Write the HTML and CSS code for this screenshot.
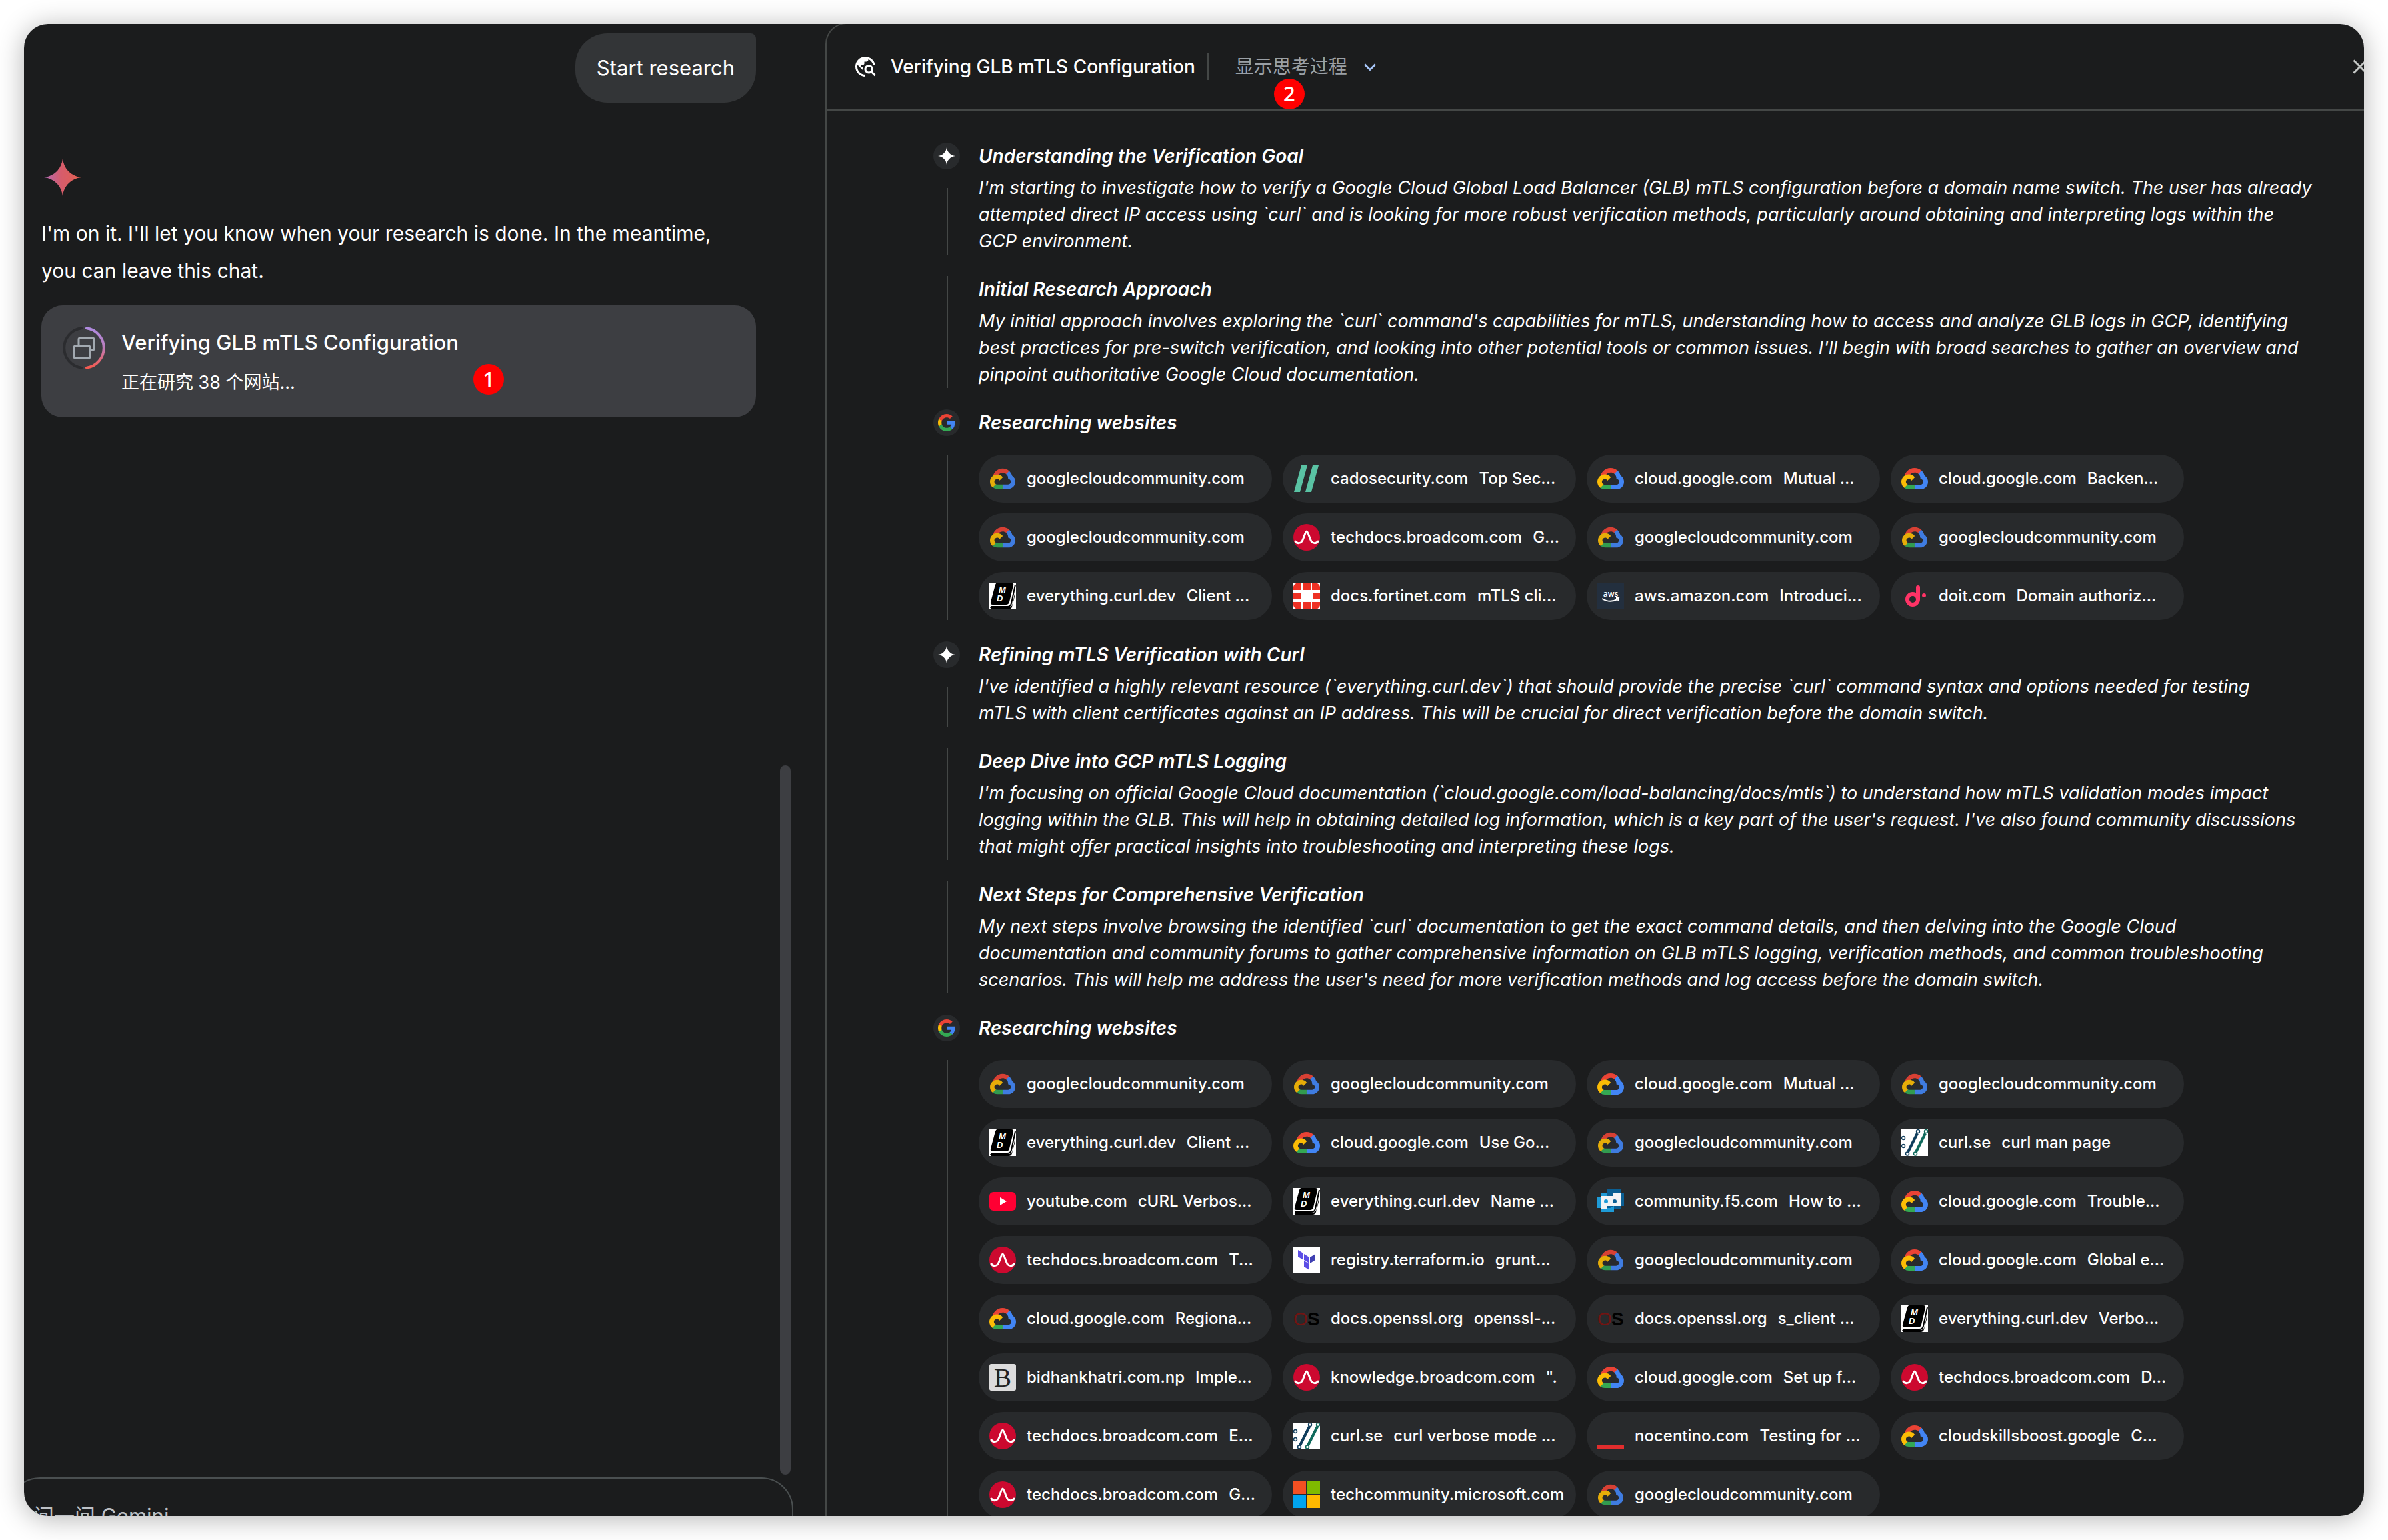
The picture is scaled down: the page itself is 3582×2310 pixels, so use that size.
FILE: index.html
```html
<!DOCTYPE html>
<html lang="zh-CN">
<head>
<meta charset="utf-8">
<title>Verifying GLB mTLS Configuration</title>
<link rel="stylesheet" href="styles.css">
</head>
<body>
<svg class="sprite" aria-hidden="true">
  <symbol id="spark" viewBox="0 0 24 24"><path d="M12 0c.7 6.500 5.500 11.300 12 12-6.500.7-11.300 5.500-12 12-.7-6.500-5.500-11.300-12-12C6.500 11.300 11.300 6.500 12 0z"/></symbol>
  <symbol id="google" viewBox="0 0 48 48">
    <path fill="#EA4335" d="M24 9.500c3.540 0 6.710 1.220 9.210 3.600l6.850-6.850C35.900 2.380 30.470 0 24 0 14.620 0 6.510 5.380 2.560 13.220l7.980 6.190C12.430 13.720 17.740 9.500 24 9.500z"/>
    <path fill="#4285F4" d="M46.980 24.550c0-1.570-.15-3.090-.38-4.550H24v9.020h12.940c-.58 2.960-2.260 5.480-4.780 7.180l7.730 6c4.510-4.180 7.090-10.360 7.090-17.650z"/>
    <path fill="#FBBC05" d="M10.530 28.590c-.48-1.450-.76-2.990-.76-4.590s.27-3.140.76-4.590l-7.980-6.190C.92 16.460 0 20.120 0 24c0 3.880.92 7.540 2.560 10.780l7.970-6.190z"/>
    <path fill="#34A853" d="M24 48c6.480 0 11.930-2.130 15.890-5.810l-7.730-6c-2.150 1.450-4.920 2.300-8.160 2.300-6.260 0-11.570-4.220-13.470-9.910l-7.980 6.190C6.510 42.620 14.620 48 24 48z"/>
  </symbol>
  <symbol id="gcloud" viewBox="0 -25 256 256">
    <path fill="#EA4335" d="M170.252 56.819l22.253-22.253 1.483-9.370C153.437-11.677 88.976-7.496 52.420 33.920 42.267 45.423 34.734 59.764 30.717 74.573l7.970-1.123 44.505-7.340 3.436-3.513c19.797-21.742 53.270-24.667 76.128-6.168l7.496.39z"/>
    <path fill="#4285F4" d="M224.205 73.918a100.249 100.249 0 0 0-30.217-48.722l-31.232 31.232a55.515 55.515 0 0 1 20.379 44.037v5.544c15.350 0 27.797 12.445 27.797 27.796 0 15.352-12.446 27.573-27.797 27.573h-55.671l-5.466 5.934v33.340l5.466 5.231h55.670c39.930.311 72.553-31.494 72.864-71.424a72.303 72.303 0 0 0-31.793-60.541"/>
    <path fill="#34A853" d="M71.870 205.796h55.593V161.290H71.870a27.275 27.275 0 0 1-11.400-2.498l-7.887 2.420-22.409 22.253-1.952 7.574a72.175 72.175 0 0 0 43.648 14.757"/>
    <path fill="#FBBC05" d="M71.870 61.425C31.940 61.664-.237 94.228.001 134.158a72.301 72.301 0 0 0 28.222 56.880l32.248-32.246c-13.990-6.322-20.208-22.786-13.887-36.776 6.320-13.990 22.786-20.208 36.775-13.888a27.796 27.796 0 0 1 13.887 13.888l32.248-32.248A72.224 72.224 0 0 0 71.870 61.425"/>
  </symbol>
  <symbol id="gcommunity" viewBox="0 0 40 40"><use href="#gcloud" x="1" y="1" width="38" height="38" opacity=".9"/></symbol>
  <symbol id="cado" viewBox="0 0 40 40"><path fill="#5ac3a4" d="M12 0h9L10 40H1zM29 0h9L27 40h-9z"/></symbol>
  <symbol id="broadcom" viewBox="0 0 40 40"><circle cx="20" cy="20" r="20" fill="#cc092f"/><path fill="none" stroke="#fff" stroke-width="3" stroke-linecap="round" stroke-linejoin="round" d="M3 26c3 4 8 3 10 0 3-5 5-15 7-15s4 10 7 15c2 3 7 4 10 0"/></symbol>
  <symbol id="md" viewBox="0 0 40 40"><path fill="#fff" d="M0 0h40v40H0z"/><path d="M12 0h21q4 0 3 4l-6 25q-1 4-5 4H5q-4 0-3-4L9 3q1-3 3-3z"/><path fill="none" stroke="#000" stroke-width="2" d="M39 3l-6 28q-1 5-6 5H2"/><path d="M1 37h27q6 0 7-6l4-19v5l-5 19q-1 4-5 4H3z"/><text x="14" y="15" class="glyph-md" font-size="13">M</text><text x="11" y="28" class="glyph-md" font-size="13">D</text></symbol>
  <symbol id="fortinet" viewBox="0 0 40 40"><path fill="#fff" d="M0 0h40v40H0z"/><path fill="#ee3124" d="M6 0h6v11H0V6q1-4 6-6zM14 0h12v11H14zM28 0h6q5 2 6 6v5H28zM0 15h11v10H0zM29 15h11v10H29zM0 29h12v11H6q-5-2-6-6zM14 29h12v11H14zM28 29h12v5q-1 4-6 6h-6z"/></symbol>
  <symbol id="aws" viewBox="0 0 40 40"><path fill="#232f3e" d="M0 0h40v40H0z"/><text x="20" y="21" text-anchor="middle" class="glyph-aws" font-size="12">aws</text><path fill="none" stroke="#fff" stroke-width="2" d="M7 24q12 7 23 1M28 23h4l-1 4"/></symbol>
  <symbol id="doit" viewBox="0 0 40 40"><circle cx="17" cy="25" r="8" fill="none" stroke="#ff3366" stroke-width="6"/><path stroke="#ff3366" stroke-width="6" stroke-linecap="round" d="M25 7v17"/><circle cx="34" cy="19" r="3" fill="#ff3366"/></symbol>
  <symbol id="curl" viewBox="0 0 40 40"><path fill="#fff" d="M0 0h40v40H0z"/><g fill="none" stroke-width="1.500"><g stroke="#0f3d5c"><circle cx="3" cy="13" r="2.500"/><circle cx="3" cy="25" r="2.500"/><circle cx="25" cy="3" r="2.500"/><circle cx="9" cy="36.500" r="2.500"/><path stroke-width="4" d="M24 6L10 34"/></g><g stroke="#0f6a5c"><circle cx="37" cy="3" r="2.500"/><circle cx="21" cy="36.500" r="2.500"/><path stroke-width="4" d="M36 6L22 34"/></g></g></symbol>
  <symbol id="youtube" viewBox="0 0 40 40"><rect y="6" width="40" height="28" rx="6" fill="#ff0033"/><path fill="#fff" d="M16 14l10 6-10 6z"/></symbol>
  <symbol id="f5" viewBox="0 0 40 40"><path fill="#1e9bd7" d="M5 7h15v6h5v23H5v-6H0V13h5z"/><path fill="#0a5f94" d="M15 2h20v5h5v20h-5v5H15zM15 32h10v-5z"/><path fill="#1e9bd7" d="M5 7h10v6H5zM5 30h20v6H5z"/><path fill="#f2f4f6" d="M6 12h18V7h11v20H15v4H6z"/><circle cx="13" cy="20" r="3" fill="#1e9bd7"/><circle cx="26" cy="20" r="3" fill="#0a5f94"/></symbol>
  <symbol id="terraform" viewBox="0 0 40 40"><path fill="#fff" d="M0 0h40v40H0z"/><path fill="#5c4ee5" d="M7 5l8 5v10l-8-5zM16 11l8 5v9l-8-5zM16 21l8 5v9l-8-5z"/><path fill="#4040b2" d="M25 16l8-5v9l-8 5z"/></symbol>
  <symbol id="openssl" viewBox="0 0 40 40"><text x="0" y="30" class="glyph-o" font-size="28">O</text><text x="21" y="30" class="glyph-s" font-size="28">S</text></symbol>
  <symbol id="bidhan" viewBox="0 0 40 40"><rect width="40" height="40" rx="3" fill="#dcdcdc"/><text x="20" y="34" text-anchor="middle" class="glyph-b" font-size="39">B</text></symbol>
  <symbol id="nocentino" viewBox="0 0 40 40"><path fill="#e12d2d" d="M0 33h40v7H0z"/></symbol>
  <symbol id="microsoft" viewBox="0 0 40 40"><path fill="#f25022" d="M0 0h19v19H0z"/><path fill="#7fba00" d="M21 0h19v19H21z"/><path fill="#00a4ef" d="M0 21h19v19H0z"/><path fill="#ffb900" d="M21 21h19v19H21z"/></symbol>
</svg>

<main class="window">
  <section class="chat">
    <div class="thread">
      <p class="prompt">Start research</p>
      <svg class="avatar" viewBox="0 0 64 64" aria-hidden="true">
        <linearGradient id="spark-fill" x1="0" y1="0" x2="1" y2="0">
          <stop offset="0" stop-color="#b06ab3"/><stop offset=".45" stop-color="#d65c6c"/><stop offset="1" stop-color="#e2604f"/>
        </linearGradient>
        <use href="#spark" x="4" y="4" width="56" height="56" fill="url(#spark-fill)"/>
      </svg>
      <p class="reply">I'm on it. I'll let you know when your research is done. In the meantime,<br>you can leave this chat.</p>
      <button class="task" type="button">
        <svg class="task-icon" viewBox="0 0 64 64" aria-hidden="true">
          <linearGradient id="ring-fill" x1="0" y1="0" x2="0" y2="1">
            <stop offset="0" stop-color="#b08be0"/><stop offset=".45" stop-color="#b97fc0"/><stop offset="1" stop-color="#f55a50"/>
          </linearGradient>
          <g fill="none" stroke-width="4" stroke-linecap="round">
            <path stroke="#2b2c2f" d="M28 2.300A30 30 0 0 0 28 61.700"/>
            <path stroke="url(#ring-fill)" d="M36 2.300A30 30 0 0 1 36 61.700"/>
          </g>
          <g fill="none" stroke="#a2a9b0" stroke-width="3" stroke-linejoin="round">
            <path d="M24 28V19q0-2 2-2h19q2 0 2 2v14q0 2-2 2h-4"/>
            <rect x="17" y="29" width="24" height="18" rx="2"/>
          </g>
        </svg>
        <span class="task-text">
          <span class="task-title">Verifying GLB mTLS Configuration</span>
          <span class="task-status">正在研究 38 个网站...</span>
        </span>
        <span class="badge badge-card">1</span>
      </button>
      <div class="thumb"></div>
    </div>
    <form class="composer">
      <textarea class="composer-input" rows="1" aria-label="问一问 Gemini" placeholder="问一问 Gemini"></textarea>
    </form>
  </section>

  <section class="panel">
    <header class="panel-head">
      <svg class="head-icon" viewBox="0 0 24 24" aria-hidden="true"><path fill="#fff" d="M19.300 16.900c.4-.7.7-1.500.7-2.400 0-2.500-2-4.500-4.500-4.500S11 12 11 14.500s2 4.500 4.500 4.500c.9 0 1.700-.3 2.400-.7l3.200 3.200 1.400-1.400-3.200-3.200zm-3.800.1c-1.400 0-2.500-1.100-2.500-2.500s1.100-2.500 2.500-2.500 2.500 1.100 2.500 2.500-1.100 2.500-2.500 2.500zM12 20v2C6.480 22 2 17.520 2 12S6.480 2 12 2c4.840 0 8.870 3.440 9.800 8h-2.070c-.64-2.460-2.400-4.470-4.730-5.410V5c0 1.100-.9 2-2 2h-2v2c0 .55-.45 1-1 1H8v2h2v3H9l-4.790-4.790C4.080 10.790 4 11.380 4 12c0 4.410 3.590 8 8 8z"/></svg>
      <h1 class="head-title">Verifying GLB mTLS Configuration</h1>
      <button class="toggle" type="button">
        <span>显示思考过程</span>
        <svg class="head-icon" viewBox="0 0 24 24" aria-hidden="true"><path fill="none" stroke="#a8c7fa" stroke-width="2" d="M6.700 9.700l5.300 5.300 5.300-5.300"/></svg>
        <span class="badge badge-toggle">2</span>
      </button>
      <button class="close" type="button" aria-label="关闭"><svg class="head-icon" viewBox="0 0 24 24" aria-hidden="true"><path fill="none" stroke="#c4c7c5" stroke-width="2" d="M5.700 5.700l12.600 12.600M18.300 5.700L5.700 18.300"/></svg></button>
    </header>

    <div class="steps">
      <section class="step">
        <div class="rail"><span class="dot"><svg class="dot-spark" aria-hidden="true"><use href="#spark"/></svg></span><span class="line"></span></div>
        <div class="thought"><h2>Understanding the Verification Goal</h2>
        <p>I'm starting to investigate how to verify a Google Cloud Global Load Balancer (GLB) mTLS configuration before a domain name switch. The user has already<br>attempted direct IP access using `curl` and is looking for more robust verification methods, particularly around obtaining and interpreting logs within the<br>GCP environment.</p></div>
      </section>
      <section class="step">
        <div class="rail"><span class="line"></span></div>
        <div class="thought"><h2>Initial Research Approach</h2>
        <p>My initial approach involves exploring the `curl` command's capabilities for mTLS, understanding how to access and analyze GLB logs in GCP, identifying<br>best practices for pre-switch verification, and looking into other potential tools or common issues. I'll begin with broad searches to gather an overview and<br>pinpoint authoritative Google Cloud documentation.</p></div>
      </section>
      <section class="step">
        <div class="rail"><span class="dot"><svg class="dot-google" aria-hidden="true"><use href="#google"/></svg></span><span class="line"></span></div>
        <div class="sources"><h2>Researching websites</h2>
        <ul class="chips">
          <li><a class="chip" href="#"><svg aria-hidden="true"><use href="#gcommunity"/></svg><span>googlecloudcommunity.com</span></a></li>
          <li><a class="chip" href="#"><svg aria-hidden="true"><use href="#cado"/></svg><span>cadosecurity.com</span><span>Top Sec...</span></a></li>
          <li><a class="chip" href="#"><svg aria-hidden="true"><use href="#gcloud"/></svg><span>cloud.google.com</span><span>Mutual ...</span></a></li>
          <li><a class="chip" href="#"><svg aria-hidden="true"><use href="#gcloud"/></svg><span>cloud.google.com</span><span>Backen...</span></a></li>
          <li><a class="chip" href="#"><svg aria-hidden="true"><use href="#gcommunity"/></svg><span>googlecloudcommunity.com</span></a></li>
          <li><a class="chip" href="#"><svg aria-hidden="true"><use href="#broadcom"/></svg><span>techdocs.broadcom.com</span><span>G...</span></a></li>
          <li><a class="chip" href="#"><svg aria-hidden="true"><use href="#gcommunity"/></svg><span>googlecloudcommunity.com</span></a></li>
          <li><a class="chip" href="#"><svg aria-hidden="true"><use href="#gcommunity"/></svg><span>googlecloudcommunity.com</span></a></li>
          <li><a class="chip" href="#"><svg aria-hidden="true"><use href="#md"/></svg><span>everything.curl.dev</span><span>Client ...</span></a></li>
          <li><a class="chip" href="#"><svg aria-hidden="true"><use href="#fortinet"/></svg><span>docs.fortinet.com</span><span>mTLS cli...</span></a></li>
          <li><a class="chip" href="#"><svg aria-hidden="true"><use href="#aws"/></svg><span>aws.amazon.com</span><span>Introduci...</span></a></li>
          <li><a class="chip" href="#"><svg aria-hidden="true"><use href="#doit"/></svg><span>doit.com</span><span>Domain authoriz...</span></a></li>
        </ul></div>
      </section>
      <section class="step">
        <div class="rail"><span class="dot"><svg class="dot-spark" aria-hidden="true"><use href="#spark"/></svg></span><span class="line"></span></div>
        <div class="thought"><h2>Refining mTLS Verification with Curl</h2>
        <p>I've identified a highly relevant resource (`everything.curl.dev`) that should provide the precise `curl` command syntax and options needed for testing<br>mTLS with client certificates against an IP address. This will be crucial for direct verification before the domain switch.</p></div>
      </section>
      <section class="step">
        <div class="rail"><span class="line"></span></div>
        <div class="thought"><h2>Deep Dive into GCP mTLS Logging</h2>
        <p>I'm focusing on official Google Cloud documentation (`cloud.google.com/load-balancing/docs/mtls`) to understand how mTLS validation modes impact<br>logging within the GLB. This will help in obtaining detailed log information, which is a key part of the user's request. I've also found community discussions<br>that might offer practical insights into troubleshooting and interpreting these logs.</p></div>
      </section>
      <section class="step">
        <div class="rail"><span class="line"></span></div>
        <div class="thought"><h2>Next Steps for Comprehensive Verification</h2>
        <p>My next steps involve browsing the identified `curl` documentation to get the exact command details, and then delving into the Google Cloud<br>documentation and community forums to gather comprehensive information on GLB mTLS logging, verification methods, and common troubleshooting<br>scenarios. This will help me address the user's need for more verification methods and log access before the domain switch.</p></div>
      </section>
      <section class="step">
        <div class="rail"><span class="dot"><svg class="dot-google" aria-hidden="true"><use href="#google"/></svg></span><span class="line"></span></div>
        <div class="sources"><h2>Researching websites</h2>
        <ul class="chips">
          <li><a class="chip" href="#"><svg aria-hidden="true"><use href="#gcommunity"/></svg><span>googlecloudcommunity.com</span></a></li>
          <li><a class="chip" href="#"><svg aria-hidden="true"><use href="#gcommunity"/></svg><span>googlecloudcommunity.com</span></a></li>
          <li><a class="chip" href="#"><svg aria-hidden="true"><use href="#gcloud"/></svg><span>cloud.google.com</span><span>Mutual ...</span></a></li>
          <li><a class="chip" href="#"><svg aria-hidden="true"><use href="#gcommunity"/></svg><span>googlecloudcommunity.com</span></a></li>
          <li><a class="chip" href="#"><svg aria-hidden="true"><use href="#md"/></svg><span>everything.curl.dev</span><span>Client ...</span></a></li>
          <li><a class="chip" href="#"><svg aria-hidden="true"><use href="#gcloud"/></svg><span>cloud.google.com</span><span>Use Go...</span></a></li>
          <li><a class="chip" href="#"><svg aria-hidden="true"><use href="#gcommunity"/></svg><span>googlecloudcommunity.com</span></a></li>
          <li><a class="chip" href="#"><svg aria-hidden="true"><use href="#curl"/></svg><span>curl.se</span><span>curl man page</span></a></li>
          <li><a class="chip" href="#"><svg aria-hidden="true"><use href="#youtube"/></svg><span>youtube.com</span><span>cURL Verbos...</span></a></li>
          <li><a class="chip" href="#"><svg aria-hidden="true"><use href="#md"/></svg><span>everything.curl.dev</span><span>Name ...</span></a></li>
          <li><a class="chip" href="#"><svg aria-hidden="true"><use href="#f5"/></svg><span>community.f5.com</span><span>How to ...</span></a></li>
          <li><a class="chip" href="#"><svg aria-hidden="true"><use href="#gcloud"/></svg><span>cloud.google.com</span><span>Trouble...</span></a></li>
          <li><a class="chip" href="#"><svg aria-hidden="true"><use href="#broadcom"/></svg><span>techdocs.broadcom.com</span><span>T...</span></a></li>
          <li><a class="chip" href="#"><svg aria-hidden="true"><use href="#terraform"/></svg><span>registry.terraform.io</span><span>grunt...</span></a></li>
          <li><a class="chip" href="#"><svg aria-hidden="true"><use href="#gcommunity"/></svg><span>googlecloudcommunity.com</span></a></li>
          <li><a class="chip" href="#"><svg aria-hidden="true"><use href="#gcloud"/></svg><span>cloud.google.com</span><span>Global e...</span></a></li>
          <li><a class="chip" href="#"><svg aria-hidden="true"><use href="#gcloud"/></svg><span>cloud.google.com</span><span>Regiona...</span></a></li>
          <li><a class="chip" href="#"><svg aria-hidden="true"><use href="#openssl"/></svg><span>docs.openssl.org</span><span>openssl-...</span></a></li>
          <li><a class="chip" href="#"><svg aria-hidden="true"><use href="#openssl"/></svg><span>docs.openssl.org</span><span>s_client ...</span></a></li>
          <li><a class="chip" href="#"><svg aria-hidden="true"><use href="#md"/></svg><span>everything.curl.dev</span><span>Verbo...</span></a></li>
          <li><a class="chip" href="#"><svg aria-hidden="true"><use href="#bidhan"/></svg><span>bidhankhatri.com.np</span><span>Imple...</span></a></li>
          <li><a class="chip" href="#"><svg aria-hidden="true"><use href="#broadcom"/></svg><span>knowledge.broadcom.com</span><span>".</span></a></li>
          <li><a class="chip" href="#"><svg aria-hidden="true"><use href="#gcloud"/></svg><span>cloud.google.com</span><span>Set up f...</span></a></li>
          <li><a class="chip" href="#"><svg aria-hidden="true"><use href="#broadcom"/></svg><span>techdocs.broadcom.com</span><span>D...</span></a></li>
          <li><a class="chip" href="#"><svg aria-hidden="true"><use href="#broadcom"/></svg><span>techdocs.broadcom.com</span><span>E...</span></a></li>
          <li><a class="chip" href="#"><svg aria-hidden="true"><use href="#curl"/></svg><span>curl.se</span><span>curl verbose mode ...</span></a></li>
          <li><a class="chip" href="#"><svg aria-hidden="true"><use href="#nocentino"/></svg><span>nocentino.com</span><span>Testing for ...</span></a></li>
          <li><a class="chip" href="#"><svg aria-hidden="true"><use href="#gcloud"/></svg><span>cloudskillsboost.google</span><span>C...</span></a></li>
          <li><a class="chip" href="#"><svg aria-hidden="true"><use href="#broadcom"/></svg><span>techdocs.broadcom.com</span><span>G...</span></a></li>
          <li><a class="chip" href="#"><svg aria-hidden="true"><use href="#microsoft"/></svg><span>techcommunity.microsoft.com</span></a></li>
          <li><a class="chip" href="#"><svg aria-hidden="true"><use href="#gcommunity"/></svg><span>googlecloudcommunity.com</span></a></li>
        </ul></div>
      </section>
    </div>
  </section>
</main>
</body>
</html>
```
FILE: styles.css
```css
* { box-sizing: border-box; margin: 0; padding: 0; }

body {
  background: #fff;
  color: #fff;
  font-family: Inter, "Noto Sans CJK SC", sans-serif;
  font-size: 28px;
  line-height: 40px;
  padding: 36px;
}

button, textarea { font: inherit; color: inherit; background: none; border: 0; }
h1, h2 { font-size: 28px; font-weight: 500; }

.sprite { display: none; }

.window {
  display: grid;
  grid-template-columns: 1202fr 2308fr;
  grid-template-rows: minmax(0, 1fr);
  height: calc(100vh - 72px);
  overflow: hidden;
  border-radius: 36px;
  background: #1b1c1d;
  box-shadow: 0 4px 40px rgba(0, 0, 0, .3);
}

/* Conversation */
.chat { display: flex; flex-direction: column; min-width: 0; }
.thread {
  position: relative;
  flex: 1;
  min-height: 0;
  display: flex;
  flex-direction: column;
  padding: 14px 104px 0 26px;
}
.prompt {
  align-self: flex-end;
  padding: 24px 32px;
  border-radius: 48px 8px 48px 48px;
  background: #333537;
  font-size: 31px;
  line-height: 56px;
}
.avatar { width: 64px; height: 64px; margin: 80px 0 24px; }
.reply { font-size: 30px; line-height: 56px; white-space: nowrap; }
.task {
  position: relative;
  display: flex;
  align-items: flex-start;
  gap: 24px;
  margin-top: 24px;
  padding: 32px;
  border-radius: 32px;
  background: #3d3e42;
  text-align: left;
}
.task-icon { width: 64px; height: 64px; flex: none; }
.task-text { display: flex; flex-direction: column; gap: 16px; }
.task-title { font-size: 31px; line-height: 48px; font-weight: 500; }
.task-status { font-size: 27px; line-height: 40px; }
.thumb {
  position: absolute;
  top: 51%;
  right: 52px;
  bottom: 4px;
  width: 16px;
  border-radius: 8px;
  background: #3d3e42;
}
.composer {
  margin: 0 48px -58px -24px;
  padding: 32px 36px;
  border: 2px solid #4a4f50;
  border-radius: 48px;
}
.composer-input {
  display: block;
  width: 100%;
  height: 48px;
  font-size: 31px;
  line-height: 48px;
  resize: none;
  overflow: hidden;
}
.composer-input::placeholder { color: #bdc1c6; opacity: 1; }

.badge {
  position: absolute;
  width: 46px;
  height: 46px;
  border-radius: 50%;
  background: #f00;
  color: #fff;
  font-family: "Noto Sans", sans-serif;
  font-size: 31px;
  line-height: 44px;
  font-weight: 500;
  text-align: center;
}
.badge-card { left: 648px; top: 88px; }
.badge-toggle { left: 58px; top: 38px; }

/* Research panel */
.panel {
  margin-top: -2px;
  min-width: 0;
  border: solid #444746;
  border-width: 2px 0 0 2px;
  border-radius: 32px 0 0 0;
}
.panel-head {
  display: flex;
  align-items: center;
  height: 130px;
  padding-left: 40px;
  border-bottom: 2px solid #444746;
}
.head-icon { display: block; width: 36px; height: 36px; flex: none; }
.head-title {
  margin-left: 20px;
  padding-right: 18px;
  border-right: 2px solid #444746;
  white-space: nowrap;
}
.toggle {
  position: relative;
  display: flex;
  align-items: center;
  gap: 16px;
  margin-left: 40px;
  color: #9aa0a6;
}
.close { margin: 0 -12px 0 auto; }

.steps {
  display: flex;
  flex-direction: column;
  gap: 32px;
  padding: 48px 0 48px 160px;
}
.step { display: grid; grid-template-columns: 40px minmax(0, 1fr); gap: 28px; }
.rail { display: flex; flex-direction: column; gap: 28px; }
.line { flex: 1; width: 2px; margin-left: 20px; background: #444746; }
.dot {
  display: flex;
  align-items: center;
  justify-content: center;
  height: 40px;
  border-radius: 50%;
  background: #282a2c;
}
.dot-spark { width: 26px; height: 26px; fill: #fff; }
.dot-google { width: 26px; height: 26px; }

.step h2, .step p { font-style: italic; white-space: nowrap; }
.step h2 { font-weight: 600; }
.step p { font-size: 27px; }
.thought { display: flex; flex-direction: column; gap: 8px; }
.sources { display: flex; flex-direction: column; gap: 28px; }

.chips {
  display: grid;
  grid-template-columns: repeat(4, 440px);
  gap: 16px;
  list-style: none;
}
.chip {
  display: flex;
  align-items: center;
  gap: 16px;
  height: 72px;
  padding: 0 16px;
  border-radius: 36px;
  background: #282a2c;
  color: #fff;
  font-size: 24px;
  font-weight: 500;
  text-decoration: none;
  white-space: nowrap;
}
.chip svg { width: 40px; height: 40px; flex: none; }

/* Lettering inside site marks */
.glyph-md { font-family: "Liberation Sans", sans-serif; font-style: italic; font-weight: 700; fill: #fff; }
.glyph-aws { font-family: "Open Sans", sans-serif; font-weight: 600; fill: #fff; }
.glyph-o { font-family: "Liberation Sans", sans-serif; fill: #721412; }
.glyph-s { font-family: "Liberation Sans", sans-serif; font-weight: 700; fill: #000; }
.glyph-b { font-family: "Liberation Serif", serif; fill: #222; }
```
